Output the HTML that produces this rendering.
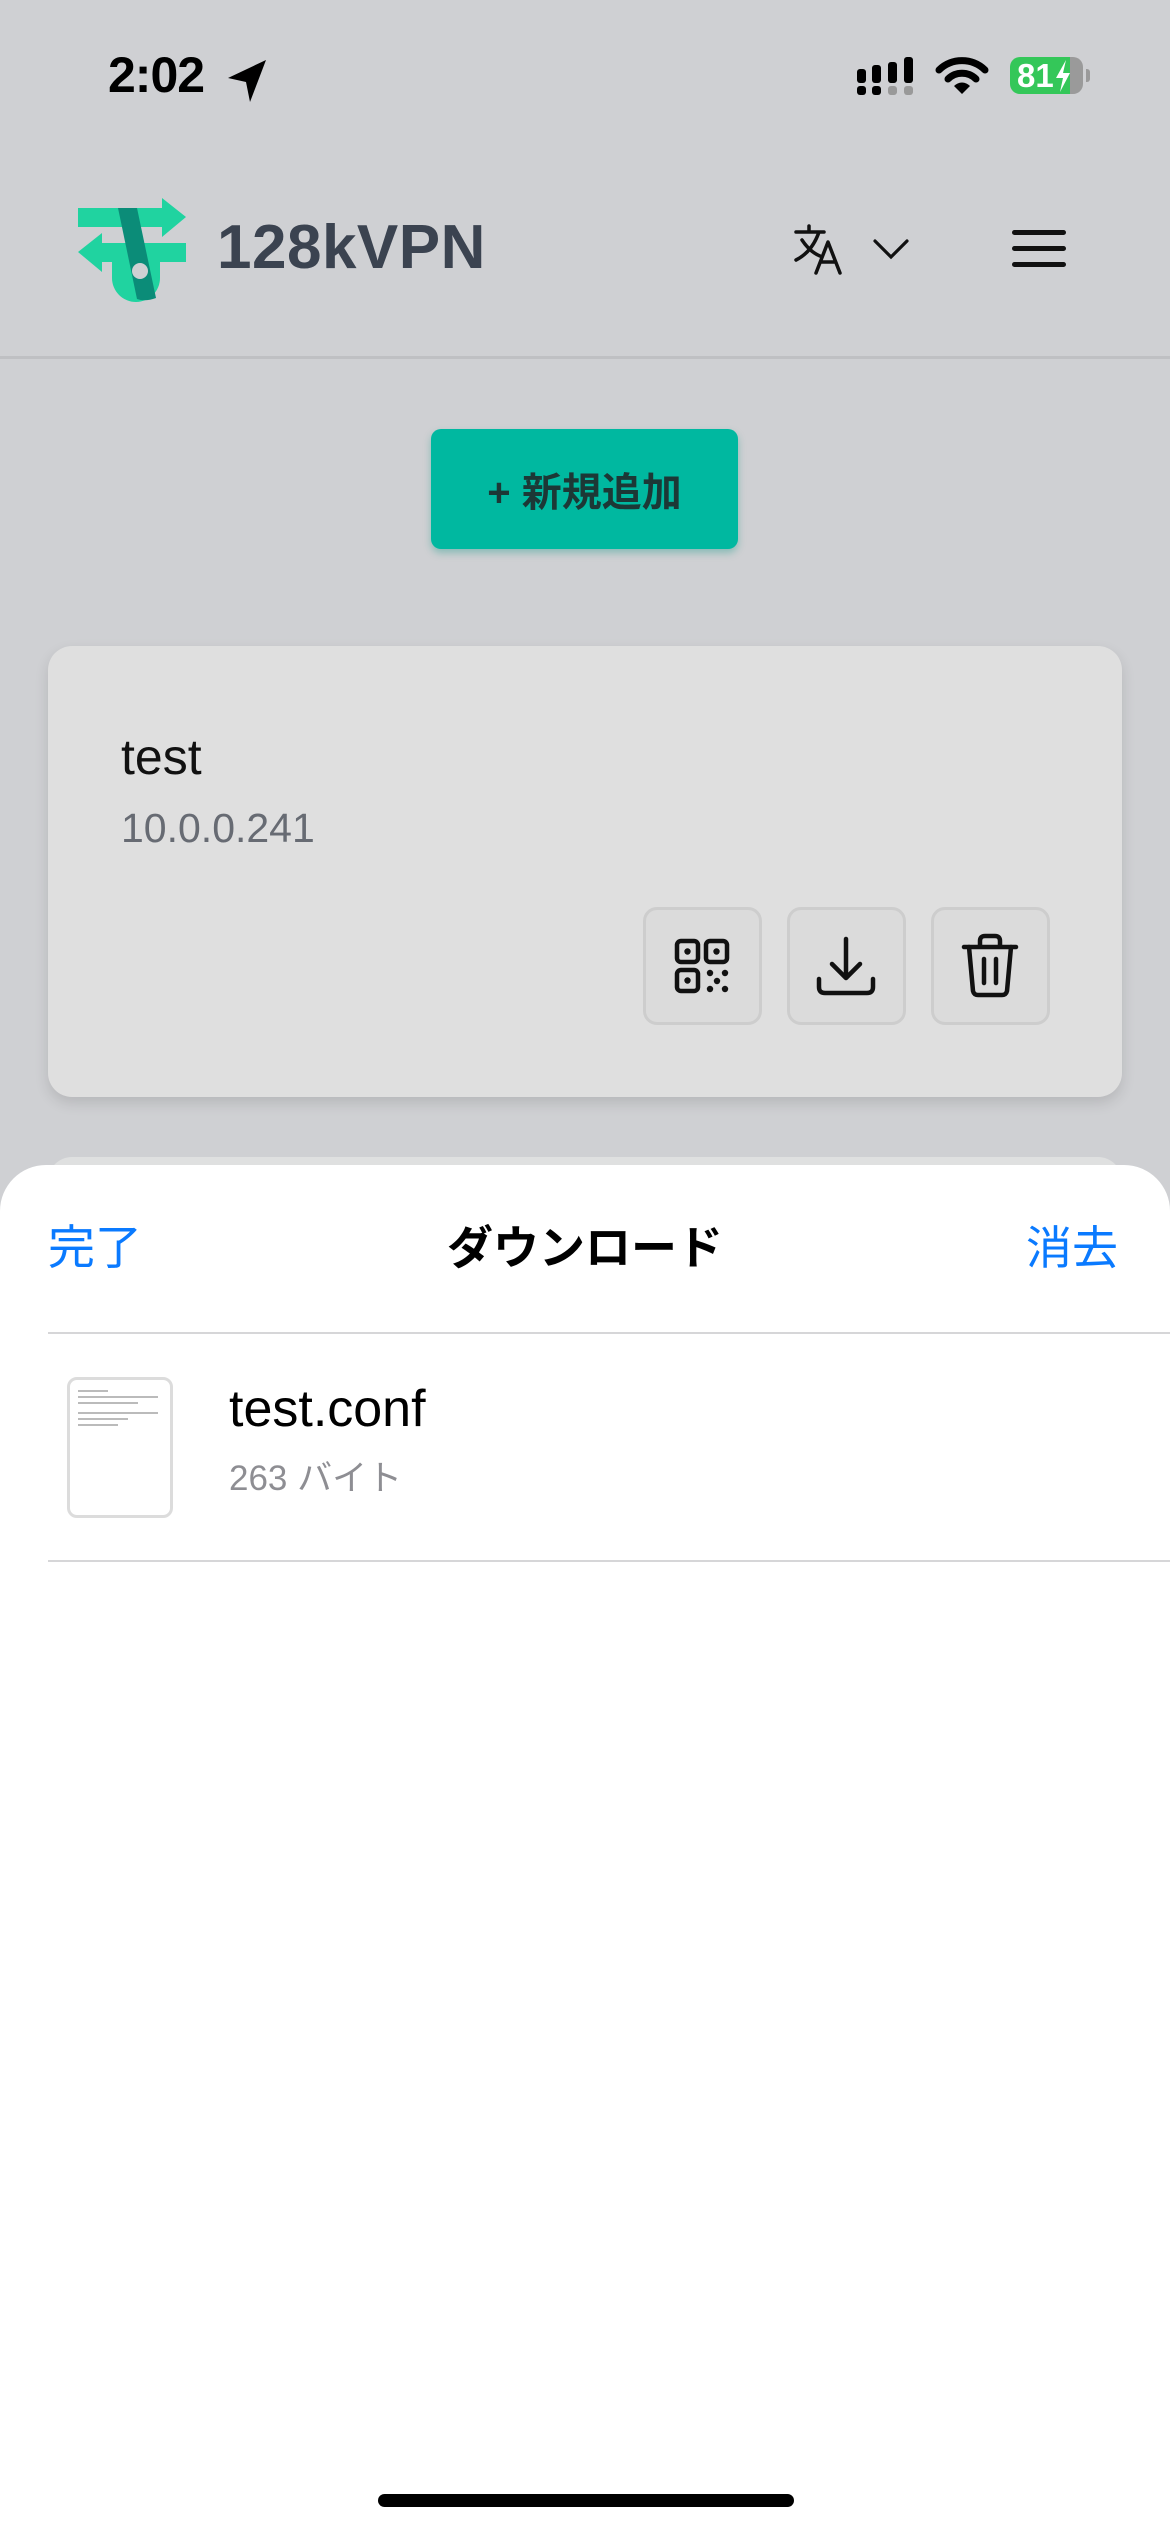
<!DOCTYPE html>
<html><head><meta charset="utf-8"><style>
*{margin:0;padding:0;box-sizing:border-box}
body{width:1170px;height:2532px;background:#cfd0d3;position:relative;overflow:hidden;font-family:"Liberation Sans","Noto Sans CJK JP",sans-serif}
.abs{position:absolute}
</style></head><body>
<!-- status bar -->
<div class="abs" style="left:108px;top:46px;font-size:50px;font-weight:bold;color:#000;letter-spacing:-1px">2:02</div>
<svg class="abs" style="left:226px;top:58px" width="44" height="46" viewBox="0 0 44 46"><path d="M40 2 L2 20 L20 24 L24 44 Z" fill="#000"/></svg>
<svg class="abs" style="left:855px;top:55px" width="60" height="42" viewBox="0 0 60 42">
<rect x="2" y="14" width="9" height="14" rx="3" fill="#000"/><rect x="2" y="31" width="9" height="9" rx="3" fill="#000"/>
<rect x="17" y="10" width="9" height="18" rx="3" fill="#000"/><rect x="17" y="31" width="9" height="9" rx="3" fill="#000"/>
<rect x="33" y="7" width="9" height="21" rx="3" fill="#000"/><rect x="33" y="31" width="9" height="9" rx="3" fill="#999"/>
<rect x="49" y="2" width="9" height="26" rx="3" fill="#000"/><rect x="49" y="31" width="9" height="9" rx="3" fill="#999"/>
</svg>
<svg class="abs" style="left:935px;top:56px" width="54" height="40" viewBox="0 0 54 40">
<path d="M4 14 A33 33 0 0 1 50 14" stroke="#000" stroke-width="7" fill="none" stroke-linecap="round"/>
<path d="M13 23 A20 20 0 0 1 41 23" stroke="#000" stroke-width="7" fill="none" stroke-linecap="round"/>
<path d="M19 30 L27 38 L35 30 A11 11 0 0 0 19 30Z" fill="#000"/>
</svg>
<div class="abs" style="left:1010px;top:57px;width:73px;height:37px;border-radius:10px;background:linear-gradient(90deg,#34c759 0,#34c759 82%,#9a9a9a 82%)"></div>
<div class="abs" style="left:1086px;top:69px;width:4px;height:13px;border-radius:0 3px 3px 0;background:#9a9a9a"></div>
<div class="abs" style="left:1017px;top:56px;font-size:33px;font-weight:bold;color:#fff;line-height:39px">81</div>
<svg class="abs" style="left:1054px;top:60px" width="18" height="32" viewBox="0 0 18 32"><path d="M12 0 L2 18 L9 18 L6 32 L16 13 L9 13 Z" fill="#fff"/></svg>

<!-- header -->
<svg class="abs" style="left:76px;top:196px" width="112" height="106" viewBox="76 196 112 106">
<path d="M78 208 H162 V198 L186 217 L162 237 V227 H78 Z" fill="#20d3a0"/>
<path d="M186 243 H102 V233 L78 252 L102 272 V262 H186 Z" fill="#20d3a0"/>
<path d="M112 262 H160 V278 A24 24 0 0 1 112 278 Z" fill="#20d3a0"/>
<path d="M118 208 L137 208 L156 298 Q145 302 137 299 Z" fill="#0b8c78"/>
<circle cx="140" cy="271" r="8" fill="#cfd0d3"/>
</svg>
<div class="abs" style="left:217px;top:212px;font-size:62px;font-weight:bold;color:#3b4350;letter-spacing:0.5px">128kVPN</div>
<svg class="abs" style="left:790px;top:220px" width="60" height="58" viewBox="0 0 60 58" fill="none" stroke="#111" stroke-width="3.5" stroke-linecap="round" stroke-linejoin="round">
<path d="M6 12 H34 M19 6 V12 M29 12 Q22 32 6 40 M12 20 Q20 32 30 36"/>
<path d="M26 53 L38 22 L50 53 M31 42 H45"/>
</svg>
<svg class="abs" style="left:873px;top:238px" width="36" height="22" viewBox="0 0 36 22"><path d="M2 3 L18 19 L34 3" stroke="#111" stroke-width="3.2" fill="none" stroke-linecap="round"/></svg>
<div class="abs" style="left:1012px;top:230px;width:54px;height:5px;border-radius:3px;background:#111"></div>
<div class="abs" style="left:1012px;top:246px;width:54px;height:5px;border-radius:3px;background:#111"></div>
<div class="abs" style="left:1012px;top:262px;width:54px;height:5px;border-radius:3px;background:#111"></div>
<div class="abs" style="left:0;top:356px;width:1170px;height:3px;background:#bfc0c3"></div>

<!-- add button -->
<div class="abs" style="left:431px;top:429px;width:307px;height:120px;border-radius:10px;background:#00b8a0;box-shadow:0 4px 8px rgba(0,150,130,.35);color:#1c3836;font-size:40px;font-weight:bold;display:flex;align-items:center;justify-content:center">+ 新規追加</div>

<!-- card -->
<div class="abs" style="left:48px;top:646px;width:1074px;height:451px;border-radius:24px;background:#dfdfdf;box-shadow:0 6px 14px rgba(0,0,0,.12)"></div>
<div class="abs" style="left:121px;top:728px;font-size:50px;color:#111">test</div>
<div class="abs" style="left:121px;top:805px;font-size:41px;color:#676b73">10.0.0.241</div>
<div class="abs" style="left:643px;top:907px;width:119px;height:118px;border-radius:14px;border:3px solid #cdcdcd;background:#dbdbdb"></div>
<div class="abs" style="left:787px;top:907px;width:119px;height:118px;border-radius:14px;border:3px solid #cdcdcd;background:#dbdbdb"></div>
<div class="abs" style="left:931px;top:907px;width:119px;height:118px;border-radius:14px;border:3px solid #cdcdcd;background:#dbdbdb"></div>
<svg class="abs" style="left:673px;top:937px" width="58" height="58" viewBox="0 0 58 58" fill="none" stroke="#111" stroke-width="4.5">
<rect x="4" y="4" width="21" height="21" rx="4"/><rect x="33" y="4" width="21" height="21" rx="4"/><rect x="4" y="33" width="21" height="21" rx="4"/>
<g fill="#111" stroke="none"><circle cx="14.5" cy="14.5" r="3.2"/><circle cx="43.5" cy="14.5" r="3.2"/><circle cx="14.5" cy="43.5" r="3.2"/>
<circle cx="37" cy="36" r="3.2"/><circle cx="52" cy="36" r="3.2"/><circle cx="44" cy="44" r="3.2"/><circle cx="37" cy="52" r="3.2"/><circle cx="52" cy="52" r="3.2"/></g>
</svg>
<svg class="abs" style="left:815px;top:935px" width="62" height="62" viewBox="0 0 62 62" fill="none" stroke="#111" stroke-width="4.5" stroke-linecap="round" stroke-linejoin="round">
<path d="M31 4 V42 M17 29 L31 43 L45 29"/><path d="M4 44 V52 Q4 58 10 58 H52 Q58 58 58 52 V44"/>
</svg>
<svg class="abs" style="left:961px;top:933px" width="58" height="66" viewBox="0 0 58 66" fill="none" stroke="#111" stroke-width="4.5" stroke-linecap="round" stroke-linejoin="round">
<path d="M3 14 H55 M19 13 V8 Q19 3 24 3 H34 Q39 3 39 8 V13"/><path d="M8 14 L12 58 Q13 62 17 62 H41 Q45 62 46 58 L50 14"/><path d="M23 26 V50 M35 26 V50"/>
</svg>

<!-- next card peek -->
<div class="abs" style="left:48px;top:1157px;width:1074px;height:60px;border-radius:24px;background:#dfe0e0"></div>

<!-- sheet -->
<div class="abs" style="left:0;top:1165px;width:1170px;height:1367px;border-radius:46px 46px 0 0;background:#fff"></div>
<div class="abs" style="left:48px;top:1219px;font-size:47px;color:#0a7aff;line-height:58px">完了</div>
<div class="abs" style="left:0;width:1170px;text-align:center;top:1219px;font-size:46px;font-weight:bold;color:#000;line-height:58px">ダウンロード</div>
<div class="abs" style="right:52px;top:1219px;font-size:46px;color:#0a7aff;line-height:58px">消去</div>
<div class="abs" style="left:48px;top:1332px;width:1122px;height:2px;background:#d6d6d8"></div>
<div class="abs" style="left:67px;top:1377px;width:106px;height:141px;border-radius:10px;border:3px solid #dcdcdc;background:#fff;padding:10px 8px">
<div style="height:2px;width:30px;background:#bbb;margin-bottom:4px"></div>
<div style="height:2px;width:80px;background:#bbb;margin-bottom:4px"></div>
<div style="height:2px;width:60px;background:#bbb;margin-bottom:8px"></div>
<div style="height:2px;width:80px;background:#bbb;margin-bottom:4px"></div>
<div style="height:2px;width:50px;background:#bbb;margin-bottom:4px"></div>
<div style="height:2px;width:40px;background:#bbb"></div>
</div>
<div class="abs" style="left:229px;top:1379px;font-size:52px;color:#000">test.conf</div>
<div class="abs" style="left:229px;top:1450px;font-size:35px;color:#8e8e93">263 バイト</div>
<div class="abs" style="left:48px;top:1560px;width:1122px;height:2px;background:#d6d6d8"></div>

<div class="abs" style="left:378px;top:2494px;width:416px;height:13px;border-radius:7px;background:#000"></div>
</body></html>
